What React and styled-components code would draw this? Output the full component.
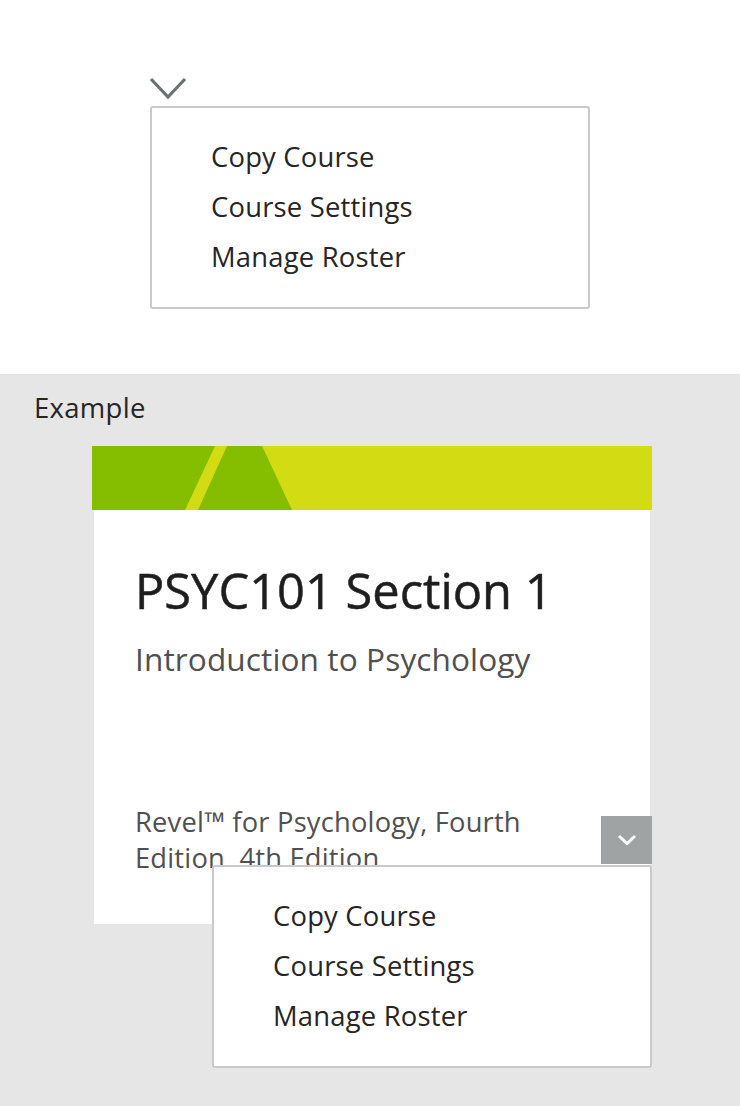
import React from "react";
import styled, { createGlobalStyle } from "styled-components";

const Global = createGlobalStyle`
  html, body { margin: 0; padding: 0; background: #ffffff; }
  body { font-family: "Open Sans", "Noto Sans", sans-serif; color: #252525; }
  * { box-sizing: border-box; }
`;

const Page = styled.div`
  width: 740px;
  min-height: 1106px;
  display: flex;
  flex-direction: column;
`;

const TopSection = styled.section`
  height: 374px;
  background: #ffffff;
  padding: 76px 0 0 150px;
  display: flex;
  flex-direction: column;
`;

const ChevronIcon = styled.svg`
  display: block;
  width: 38px;
  height: 24px;
  margin-left: -1px;
`;

const Menu = styled.ul`
  list-style: none;
  margin: 0;
  width: ${(p) => p.$width}px;
  height: 203px;
  background: #ffffff;
  border: 2px solid #c9c9c9;
  border-radius: 3px;
  padding: 24px 0 0 59px;
  display: flex;
  flex-direction: column;
`;

const MenuItem = styled.li`
  font-size: 27.4px;
  line-height: 50px;
  color: #252525;
  letter-spacing: 0.2px;
  white-space: nowrap;
`;

const TopMenu = styled(Menu)`
  margin-top: 6px;
`;

const ExampleSection = styled.section`
  flex: 1;
  background: #e6e6e6;
  padding: 18px 0 0 34px;
  min-height: 732px;
`;

const Label = styled.div`
  font-size: 27.5px;
  line-height: 32px;
  color: #252525;
  letter-spacing: 0.3px;
`;

const Card = styled.div`
  position: relative;
  margin: 22px 0 0 58px;
  width: 560px;
`;

const Banner = styled.svg`
  display: block;
  width: 560px;
  height: 64px;
`;

const CardBody = styled.div`
  margin: 0 2px;
  height: 414px;
  background: #ffffff;
  padding: 54px 60px 48px 41px;
  display: flex;
  flex-direction: column;
`;

const Title = styled.h2`
  margin: 0;
  font-size: 48.8px;
  line-height: 52px;
  font-weight: 400;
  color: #1e1e1e;
  letter-spacing: 0;
  white-space: nowrap;
  -webkit-text-stroke: 0.5px #1e1e1e;
`;

const Subtitle = styled.div`
  margin-top: 23px;
  font-size: 31.6px;
  line-height: 40px;
  color: #505050;
  letter-spacing: 0.1px;
  white-space: nowrap;
`;

const Product = styled.div`
  margin-top: auto;
  font-size: 27.3px;
  line-height: 36px;
  color: #505050;
  letter-spacing: 0.2px;
`;

const Toggle = styled.button`
  position: absolute;
  right: 0;
  top: 370px;
  width: 51px;
  height: 48px;
  border: none;
  padding: 0;
  background: #9fa3a3;
  display: flex;
  align-items: center;
  justify-content: center;
  cursor: pointer;
`;

const CardMenu = styled(Menu)`
  position: absolute;
  left: 120px;
  top: 419px;
`;

const items = ["Copy Course", "Course Settings", "Manage Roster"];

export default function App() {
  return (
    <Page>
      <Global />
      <TopSection>
        <ChevronIcon viewBox="0 0 38 24">
          <polyline
            points="2,3 19,21 36,3"
            fill="none"
            stroke="#6b7272"
            strokeWidth="3.2"
          />
        </ChevronIcon>
        <TopMenu $width={440}>
          {items.map((t) => (
            <MenuItem key={t}>{t}</MenuItem>
          ))}
        </TopMenu>
      </TopSection>
      <ExampleSection>
        <Label>Example</Label>
        <Card>
          <Banner viewBox="0 0 560 64">
            <rect x="0" y="0" width="560" height="64" fill="#d3db12" />
            <polygon points="0,0 123,0 93,64 0,64" fill="#85bd00" />
            <polygon points="135,0 170,0 200,64 106,64" fill="#85bd00" />
          </Banner>
          <CardBody>
            <Title>PSYC101 Section 1</Title>
            <Subtitle>Introduction to Psychology</Subtitle>
            <Product>Revel™ for Psychology, Fourth Edition, 4th Edition</Product>
          </CardBody>
          <Toggle aria-label="Open menu">
            <svg width="20" height="12" viewBox="0 0 20 12">
              <polyline
                points="2,2 10,9.5 18,2"
                fill="none"
                stroke="#ffffff"
                strokeWidth="3"
              />
            </svg>
          </Toggle>
          <CardMenu $width={440}>
            {items.map((t) => (
              <MenuItem key={t}>{t}</MenuItem>
            ))}
          </CardMenu>
        </Card>
      </ExampleSection>
    </Page>
  );
}
